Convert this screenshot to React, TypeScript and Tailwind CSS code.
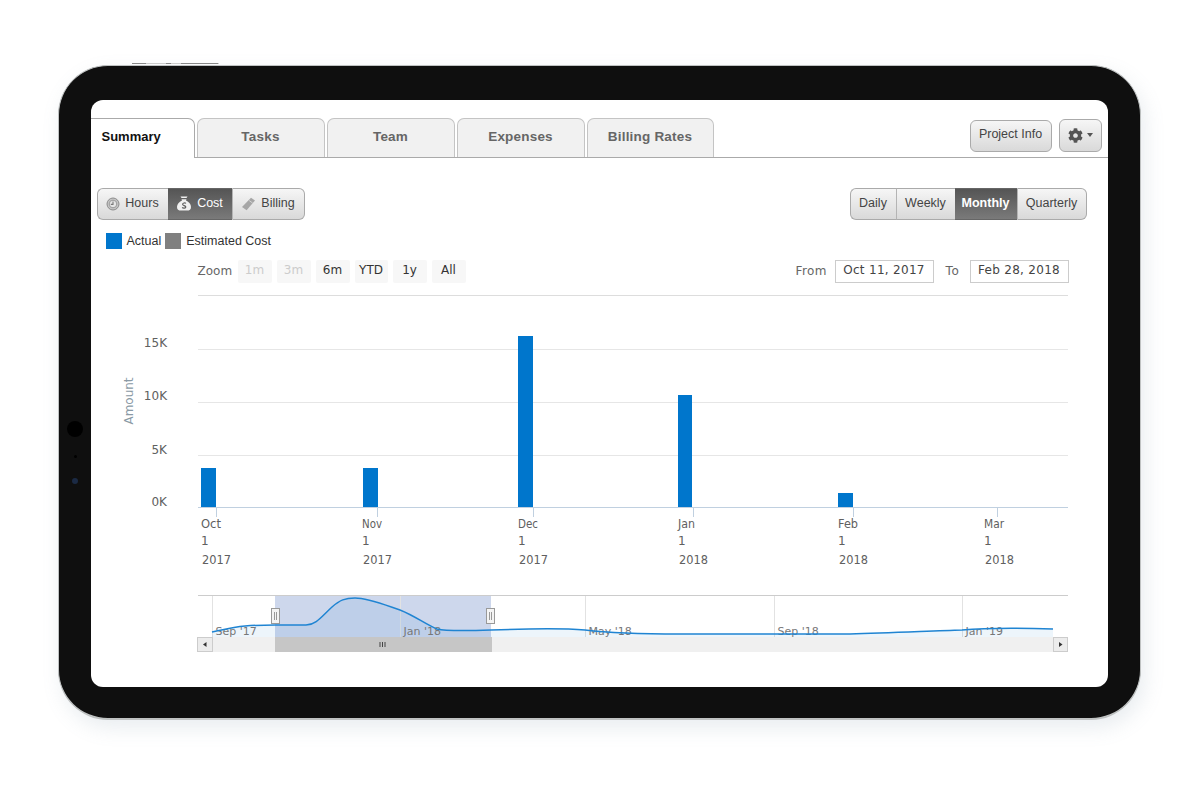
import React from "react";
import { FaCog } from "react-icons/fa";

const sans = "font-['Liberation_Sans',Arial,sans-serif]";
const dj = "font-['DejaVu_Sans',sans-serif]";

function Tab({ label, w, active }: { label: string; w: string; active?: boolean }) {
  return active ? (
    <div className={`${w} h-[40px] -mb-px bg-white border-t border-r border-[#aaa] rounded-tr-[7px] flex items-center pb-[2px] pl-[11px] text-[13px] font-bold text-[#111]`}>
      {label}
    </div>
  ) : (
    <div className={`${w} h-[39px] bg-[#f1f1f1] border border-b-0 border-[#c4c4c4] rounded-t-[7px] flex items-center justify-center pb-[1px] text-[13.5px] tracking-[0.2px] font-bold text-[#666]`}>
      {label}
    </div>
  );
}

const ClockIcon = () => (
  <svg width="14" height="14" viewBox="0 0 14 14" className="shrink-0">
    <circle cx="7" cy="7" r="6" fill="#c4c4c4" stroke="#8c8c8c" strokeWidth="1" />
    <circle cx="7" cy="7" r="3.8" fill="#e6e6e6" stroke="#8c8c8c" strokeWidth="0.8" />
    <path d="M7 4.4V7.4H4.8" fill="none" stroke="#777" strokeWidth="1.1" />
  </svg>
);
const BagIcon = () => (
  <svg width="16" height="15" viewBox="0 0 16 15" className="shrink-0">
    <path d="M4.5 0.5H11.5L10.5 2H5.5Z" fill="#f0f0f0" />
    <path d="M5.5 3.2H10.5L10 4.6C13 6 15 8.2 15 11C15 13.6 13.5 14.6 11 14.6H5C2.5 14.6 1 13.6 1 11C1 8.2 3 6 6 4.6Z" fill="#f0f0f0" />
    <path d="M10 7.4C9 6.6 6.6 6.8 6.6 8.3C6.6 10 9.8 9.2 9.8 11C9.8 12.4 7.2 12.4 6.1 11.6" fill="none" stroke="#5f5f5f" strokeWidth="1.2" />
  </svg>
);
const TagIcon = () => (
  <svg width="15" height="14" viewBox="0 0 15 14" className="shrink-0">
    <path d="M10 0.8L14 3.6L5.6 13.2L1 10Z" fill="#a6a6a6" />
    <path d="M8.2 3.6L11.6 6" stroke="#e6e6e6" strokeWidth="0.7" />
  </svg>
);

function Seg({ w, active, bold, first, last, children }: { w: string; active?: boolean; bold?: boolean; first?: boolean; last?: boolean; children: React.ReactNode }) {
  const corners = first ? "rounded-l-[6px] border-l border-l-[#aaaaaa]" : last ? "rounded-r-[6px] border-r border-r-[#aaaaaa]" : "";
  const divider = first ? "" : "border-l border-l-[#b4b4b4]";
  return active ? (
    <div className={`${w} h-[32px] bg-gradient-to-b from-[#555555] to-[#7a7a7a] border-y border-[#666] flex items-center justify-center gap-[5px] text-[12.5px] text-white ${bold ? "font-bold" : ""}`}>
      {children}
    </div>
  ) : (
    <div className={`${w} h-[32px] bg-gradient-to-b from-[#f6f6f6] to-[#d9d9d9] border-y border-y-[#aaaaaa] ${corners} ${divider} flex items-center justify-center gap-[5px] text-[12.5px] text-[#444]`}>
      {children}
    </div>
  );
}

function ZoomBtn({ label, disabled, w }: { label: string; disabled?: boolean; w?: string }) {
  return (
    <div className={`${w ?? "w-[34px]"} h-[23px] rounded-[2px] bg-[#f7f7f7] flex items-center justify-center pb-[2px] text-[12px] ${disabled ? "text-[#cccccc]" : "text-[#333]"}`}>
      {label}
    </div>
  );
}

function DateBox({ value }: { value: string }) {
  return (
    <div className="w-[99px] h-[23px] border border-[#cccccc] flex items-center justify-center pb-[2px] text-[12px] text-[#444] tracking-[0.3px]">
      {value}
    </div>
  );
}

const yTicks = [
  { y: 349, l: "15K", yt: 343 },
  { y: 402, l: "10K", yt: 396 },
  { y: 455, l: "5K", yt: 450 },
  { y: 507, l: "0K", yt: 502 },
];
const bars = [
  { x: 201, w: 15, top: 468 },
  { x: 363, w: 15, top: 468 },
  { x: 518, w: 15, top: 336 },
  { x: 678, w: 14, top: 395 },
  { x: 838, w: 15, top: 493 },
];
const xLabels = [
  { x: 201, tick: 216, m: "Oct", y: "2017" },
  { x: 362, tick: 377, m: "Nov", y: "2017" },
  { x: 518, tick: 533, m: "Dec", y: "2017" },
  { x: 678, tick: 693, m: "Jan", y: "2018" },
  { x: 838, tick: 853, m: "Feb", y: "2018" },
  { x: 984, tick: 997, m: "Mar", y: "2018" },
];
const nav = [
  { x: 212, l: "Sep '17" },
  { x: 400, l: "Jan '18" },
  { x: 585, l: "May '18" },
  { x: 774, l: "Sep '18" },
  { x: 962, l: "Jan '19" },
];
const line =
  "M212 632 C222 630 232 627 245 626 C258 625 265 625 275 625 L306 625 C316 625 322 616 332 607 C340 600 345 598 355 598 C368 598 385 605 400 610 C415 616 425 624 437 629 C445 631 460 631 491 630 C520 629 560 628 585 630 C610 633 640 634 680 634 L850 634 C890 633 930 631 962 630 C985 628 1020 628 1053 629";

function Chart() {
  return (
    <svg width="955" height="365" viewBox="120 290 955 365" className={`ml-[29px] mt-[7px] shrink-0 ${dj}`}>
      <line x1="198" x2="1068" y1="295.5" y2="295.5" stroke="#dddddd" />
      {yTicks.slice(0, 3).map((t) => (
        <line key={t.y} x1="198" x2="1068" y1={t.y + 0.5} y2={t.y + 0.5} stroke="#e6e6e6" />
      ))}
      <line x1="198" x2="1068" y1="507.5" y2="507.5" stroke="#c0d0e0" />
      {yTicks.map((t) => (
        <text key={t.l} x="167" y={t.yt} textAnchor="end" dominantBaseline="middle" fontSize="12" fill="#606060">{t.l}</text>
      ))}
      <text transform="translate(129 401) rotate(-90)" textAnchor="middle" dominantBaseline="middle" fontSize="12" fill="#8a9aa5">Amount</text>
      {bars.map((b) => (
        <rect key={b.x} x={b.x} y={b.top} width={b.w} height={507 - b.top} fill="#0076cc" />
      ))}
      {xLabels.map((l) => (
        <g key={l.m} fontSize="12" fill="#606060">
          <line x1={l.tick + 0.5} x2={l.tick + 0.5} y1="507" y2="517" stroke="#c0d0e0" />
          <text x={l.x} y="528" textLength={l.m === "Jan" ? 17 : 20} lengthAdjust="spacingAndGlyphs">{l.m}</text>
          <text x={l.x} y="545">1</text>
          <text x={l.x + 1} y="563.5" textLength="29" lengthAdjust="spacingAndGlyphs">{l.y}</text>
        </g>
      ))}

      <line x1="198" x2="1068" y1="595.5" y2="595.5" stroke="#cccccc" />
      <rect x="275" y="596" width="216" height="41" fill="#cdd7ec" />
      {nav.map((n) => (
        <line key={n.x} x1={n.x + 0.5} x2={n.x + 0.5} y1="596" y2="637" stroke="#e2e2e2" />
      ))}
      <path d={`${line} L1053 637 L212 637 Z`} fill="#0076cc" fillOpacity="0.07" />
      {nav.map((n) => (
        <text key={n.l} x={n.x + 3.5} y="634.5" fontSize="11" fill="#777">{n.l}</text>
      ))}
      <path d={line} fill="none" stroke="#1f84d2" strokeWidth="1.5" />
      <g>
        <rect x="198" y="637" width="870" height="15" fill="#f0f0f0" />
        <rect x="275" y="637" width="217" height="15" fill="#c6c6c6" />
        <path d="M380 642V647M382.5 642V647M385 642V647" stroke="#444" strokeWidth="1" />
        <rect x="197.5" y="637.5" width="15" height="14" fill="#ececec" stroke="#cccccc" />
        <path d="M203 644.5L206.5 642V647Z" fill="#333" />
        <rect x="1053.5" y="637.5" width="14" height="14" fill="#ececec" stroke="#cccccc" />
        <path d="M1062.5 644.5L1059 642V647Z" fill="#333" />
      </g>
      {[271, 486].map((x) => (
        <g key={x}>
          <rect x={x + 0.5} y="608.5" width="8" height="15" fill="#f4f4f4" stroke="#999" />
          <path d={`M${x + 3.5} 612V620M${x + 5.5} 612V620`} stroke="#999" strokeWidth="1" />
        </g>
      ))}
    </svg>
  );
}

export default function App() {
  return (
    <div className="w-[1200px] h-[800px] bg-white overflow-hidden pt-[65px] pl-[58px]">
      <div className="relative w-[1083px] h-[655px] rounded-[50px] bg-[#0f0f0f] border-[1.5px] border-[#bfc2c2] border-b-[2px] shadow-[4px_8px_20px_rgba(120,140,160,0.16)] pt-[33.5px] pl-[31.5px]">
        <div className="absolute -top-[3px] left-[73px] w-[87px] h-[1px] bg-[#cccccc]" />
        <div className="absolute -top-[3px] left-[73px] w-[14px] h-[1px] bg-[#888]" />
        <div className="absolute -top-[3px] left-[107px] w-[5px] h-[1px] bg-[#888]" />
        <div className="absolute -top-[3px] left-[122px] w-[37px] h-[1px] bg-[#888]" />
        <div className="absolute top-[355px] left-[8px] w-[16px] h-[16px] rounded-full bg-black" />
        <div className="absolute top-[389px] left-[14.5px] w-[3px] h-[3px] rounded-full bg-black" />
        <div className="absolute top-[412px] left-[13px] w-[6px] h-[6px] rounded-full bg-[#1b2a44]" />
        <div className={`w-[1017px] h-[587px] bg-white rounded-[12px] overflow-hidden flex flex-col ${sans}`}>
          <div className="h-[58px] shrink-0 border-b border-[#aaaaaa] flex items-end justify-between pr-[6px]">
            <div className="flex gap-[2px]">
              <Tab label="Summary" w="w-[104px]" active />
              <Tab label="Tasks" w="w-[128px]" />
              <Tab label="Team" w="w-[128px]" />
              <Tab label="Expenses" w="w-[128px]" />
              <Tab label="Billing Rates" w="w-[127px]" />
            </div>
            <div className="flex items-end gap-[7px] pb-[5px]">
              <div className="w-[82px] h-[32px] pb-[2px] rounded-[6px] border border-[#aaaaaa] bg-gradient-to-b from-[#f6f6f6] to-[#d9d9d9] flex items-center justify-center text-[12.5px] text-[#444]">
                Project Info
              </div>
              <div className="w-[43px] h-[33px] rounded-[6px] border border-[#aaaaaa] bg-gradient-to-b from-[#f6f6f6] to-[#d9d9d9] flex items-center justify-center gap-[4px] text-[#555]">
                <FaCog size={15} />
                <span className="w-0 h-0 border-x-[3.5px] border-x-transparent border-t-[4px] border-t-[#555]" />
              </div>
            </div>
          </div>

          <div className="mt-[30px] h-[32px] shrink-0 flex justify-between pl-[6px] pr-[21px]">
            <div className="flex">
              <Seg w="w-[71px]" first><ClockIcon />Hours</Seg>
              <Seg w="w-[64px]" active><BagIcon />Cost</Seg>
              <Seg w="w-[73px]" last><TagIcon />Billing</Seg>
            </div>
            <div className="flex">
              <Seg w="w-[46px]" first>Daily</Seg>
              <Seg w="w-[59px]">Weekly</Seg>
              <Seg w="w-[62px]" active bold>Monthly</Seg>
              <Seg w="w-[70px]" last>Quarterly</Seg>
            </div>
          </div>

          <div className="mt-[13px] h-[16px] shrink-0 pl-[15px] flex items-center text-[12.5px] text-[#333]">
            <span className="w-[16px] h-[16px] bg-[#0076cc]" />
            <span className="ml-[5px] pt-[1px]">Actual</span>
            <span className="ml-[4px] w-[16px] h-[16px] bg-[#808080]" />
            <span className="ml-[5px] pt-[1px]">Estimated Cost</span>
          </div>

          <div className={`mt-[11px] h-[23px] shrink-0 flex items-center justify-between pl-[107px] pr-[39px] ${dj}`}>
            <div className="flex items-center gap-[5px]">
              <span className="text-[12px] text-[#666] w-[35px]">Zoom</span>
              <ZoomBtn label="1m" disabled />
              <ZoomBtn label="3m" disabled />
              <ZoomBtn label="6m" />
              <ZoomBtn label="YTD" w="w-[33px]" />
              <ZoomBtn label="1y" />
              <ZoomBtn label="All" />
            </div>
            <div className="flex items-center">
              <span className="text-[12px] text-[#666] mr-[7px] w-[32px] tracking-[0.4px]">From</span>
              <DateBox value="Oct 11, 2017" />
              <span className="text-[12px] text-[#666] ml-[12px] mr-[9px] w-[15px] tracking-[0.8px]">To</span>
              <DateBox value="Feb 28, 2018" />
            </div>
          </div>

          <Chart />
        </div>
      </div>
    </div>
  );
}
